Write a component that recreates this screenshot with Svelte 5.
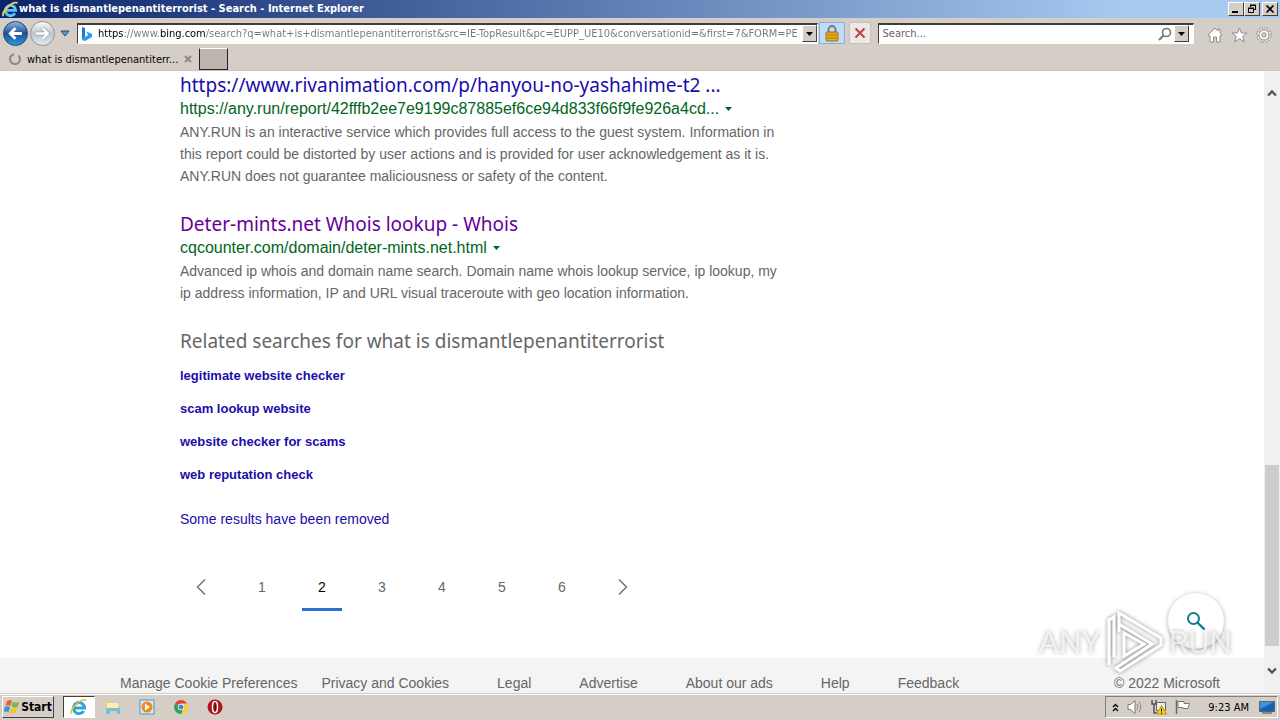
<script>
  let address =
    'https://www.bing.com/search?q=what+is+dismantlepenantiterrorist&src=IE-TopResult&pc=EUPP_UE10&conversationid=&first=7&FORM=PERE';
  let query = '';

  const results = [
    {
      title: 'https://www.rivanimation.com/p/hanyou-no-yashahime-t2 ...',
      url: 'https://any.run/report/42fffb2ee7e9199c87885ef6ce94d833f66f9fe926a4cd...',
      text: 'ANY.RUN is an interactive service which provides full access to the guest system. Information in this report could be distorted by user actions and is provided for user acknowledgement as it is. ANY.RUN does not guarantee maliciousness or safety of the content.',
      visited: false
    },
    {
      title: 'Deter-mints.net Whois lookup - Whois',
      url: 'cqcounter.com/domain/deter-mints.net.html',
      text: 'Advanced ip whois and domain name search. Domain name whois lookup service, ip lookup, my ip address information, IP and URL visual traceroute with geo location information.',
      visited: true
    }
  ];

  const related = [
    'legitimate website checker',
    'scam lookup website',
    'website checker for scams',
    'web reputation check'
  ];

  const pages = [1, 2, 3, 4, 5, 6];
  const footerLinks = ['Legal', 'Advertise', 'About our ads', 'Help', 'Feedback'];
</script>

<div class="screen">
  <header class="titlebar">
    <svg class="titlebar__icon" viewBox="0 0 18 18" aria-hidden="true">
      <path d="M4 10h10.500a5.500 5.500 0 1 0-.8 3" fill="none" stroke="#5cc3f3" stroke-width="3" />
      <path d="M1.500 16C-1 12 10 0 16.500 2" fill="none" stroke="#f2d24b" stroke-width="2" />
    </svg>
    <h1>what is dismantlepenantiterrorist - Search - Internet Explorer</h1>
    <div class="titlebar__buttons">
      <button class="win" aria-label="Minimize">
        <svg viewBox="0 0 12 10"><path d="M2 8h6" stroke="#000" stroke-width="2" /></svg>
      </button>
      <button class="win" aria-label="Restore">
        <svg viewBox="0 0 12 10"><path d="M4.500 3V1.500h5v4H8M4 1h6M2.500 4.500h5v4h-5zM2 4h6" fill="none" stroke="#000" /></svg>
      </button>
      <button class="win win--close" aria-label="Close">
        <svg viewBox="0 0 12 10"><path d="M2.500 1.500l7 7m0-7l-7 7" stroke="#000" stroke-width="1.700" /></svg>
      </button>
    </div>
  </header>

  <nav class="toolbar">
    <div class="history">
      <button class="round round--back" aria-label="Back">
        <svg viewBox="0 0 16 16"><path d="M14 8H3m5-5L3 8l5 5" fill="none" stroke="#fff" stroke-width="2.600" /></svg>
      </button>
      <button class="round" aria-label="Forward">
        <svg viewBox="0 0 16 16"><path d="M2 8h11M8 3l5 5-5 5" fill="none" stroke="#9ba3ad" stroke-width="3.600" /><path d="M2 8h11M8 3l5 5-5 5" fill="none" stroke="#fff" stroke-width="2.200" /></svg>
      </button>
      <button class="plain" aria-label="Recent pages">
        <svg width="10" height="7" viewBox="0 0 10 7"><path d="M1 1h8L5 6z" fill="#37aee0" stroke="#27476b" /></svg>
      </button>
    </div>

    <div class="field field--address">
      <svg width="12" height="16" viewBox="0 0 12 16" aria-hidden="true">
        <path d="M1 1l3 1v9l-3 3z" fill="#1879df" />
        <path d="M1 14l3-3 3-2-1.500-3.500L11 8v3l-7 4z" fill="#2d9bf0" />
      </svg>
      <input class="address" aria-label="Address" bind:value={address} />
      <button class="drop" aria-label="Show address list">
        <svg width="7" height="4" viewBox="0 0 7 4"><path d="M0 0h7L3.500 4z" /></svg>
      </button>
    </div>
    <button class="tool tool--lock" aria-label="Security report">
      <svg width="14" height="17" viewBox="0 0 14 17">
        <path d="M3.500 8V4.500a3.500 3.500 0 0 1 7 0V8" fill="none" stroke="#777" stroke-width="1.800" />
        <rect x="1" y="7" width="12" height="9" rx="1" fill="#e5ac1d" stroke="#99711b" />
        <path d="M2 10h10M2 13h10" stroke="#b47d0d" />
      </svg>
    </button>
    <button class="tool" aria-label="Stop">
      <svg width="12" height="12" viewBox="0 0 12 12"><path d="M1.500 1.500l9 9m0-9l-9 9" stroke="#bd4145" stroke-width="2" /></svg>
    </button>

    <div class="field field--search">
      <input aria-label="Search" placeholder="Search..." bind:value={query} />
      <button class="plain" aria-label="Go">
        <svg width="14" height="14" viewBox="0 0 14 14"><circle cx="8.500" cy="5.500" r="4" fill="none" stroke="#777" stroke-width="1.600" /><path d="M5.500 8.500L1 13" stroke="#777" stroke-width="2" /></svg>
      </button>
      <button class="drop" aria-label="Search providers">
        <svg width="7" height="4" viewBox="0 0 7 4"><path d="M0 0h7L3.500 4z" /></svg>
      </button>
    </div>

    <div class="commands">
      <button class="plain" aria-label="Home">
        <svg width="16" height="16" viewBox="0 0 16 16"><path d="M8 1L.8 8.200l1.400 1L3 8.500V15h3.500v-5h3v5H13V8.500l.8.700 1.400-1L13 6V2h-2v2z" fill="#fff" stroke="#8d8d8d" /></svg>
      </button>
      <button class="plain" aria-label="Favorites">
        <svg width="17" height="16" viewBox="0 0 17 16"><path d="M8.500 1l2 5h5.500l-4.300 3.500L13.300 15 8.500 11.700 3.700 15l1.600-5.500L1 6h5.500z" fill="#fff" stroke="#8d8d8d" /></svg>
      </button>
      <button class="plain" aria-label="Tools">
        <svg width="16" height="16" viewBox="0 0 16 16">
          <circle cx="8" cy="8" r="6" fill="none" stroke="#8d8d8d" stroke-width="3.500" stroke-dasharray="2.700 2.012" />
          <circle cx="8" cy="8" r="6" fill="none" stroke="#fff" stroke-width="2" stroke-dasharray="1.700 3.012" stroke-dashoffset="-.5" />
          <circle cx="8" cy="8" r="5" fill="#fff" stroke="#999" />
          <circle cx="8" cy="8" r="2.200" fill="#d5d0c8" stroke="#8d8d8d" />
        </svg>
      </button>
    </div>
  </nav>

  <div class="tabs">
    <div class="tab">
      <svg width="12" height="12" viewBox="0 0 12 12" aria-hidden="true"><path d="M5 1.200A5 5 0 1 0 9.500 2.500" fill="none" stroke="#888" stroke-width="2" /></svg>
      <span>what is dismantlepenantiterr...</span>
      <button class="plain" aria-label="Close tab">
        <svg width="8" height="8" viewBox="0 0 8 8"><path d="M1 1l6 6m0-6L1 7" stroke="#888" stroke-width="2" /></svg>
      </button>
    </div>
    <button class="newtab" aria-label="New tab"></button>
  </div>

  <div class="viewport">
    <div class="page">
      <main>
        {#each results as result}
          <article class="result">
            <h2><a href="#result" class:visited={result.visited}>{result.title}</a></h2>
            <div class="result__url">
              <cite>{result.url}</cite>
              <button class="plain" aria-label="Result actions">
                <svg width="7" height="4" viewBox="0 0 7 4"><path d="M0 0h7L3.500 4z" fill="#006621" /></svg>
              </button>
            </div>
            <p>{result.text}</p>
          </article>
        {/each}

        <section class="related">
          <h2>Related searches for what is dismantlepenantiterrorist</h2>
          <ul>
            {#each related as item}
              <li><a href="#related">{item}</a></li>
            {/each}
          </ul>
        </section>

        <a class="removed" href="#removed">Some results have been removed</a>

        <nav class="pager" aria-label="Pages">
          <a class="arrow" href="#prev" aria-label="Previous page">
            <svg width="10" height="16" viewBox="0 0 10 16"><path d="M9 .5L1.500 8 9 15.500" fill="none" stroke="#767676" stroke-width="1.500" /></svg>
          </a>
          {#each pages as page}
            <a href="#page" class:current={page === 2}>{page}</a>
          {/each}
          <a class="arrow" href="#next" aria-label="Next page">
            <svg width="10" height="16" viewBox="0 0 10 16"><path d="M1 .5L8.500 8 1 15.500" fill="none" stroke="#767676" stroke-width="1.500" /></svg>
          </a>
        </nav>
      </main>

      <footer class="footer">
        <div class="footer__privacy">
          <a href="#cookies">Manage Cookie Preferences</a>
          <a href="#privacy">Privacy and Cookies</a>
        </div>
        {#each footerLinks as link}
          <a href="#footer">{link}</a>
        {/each}
        <span class="footer__copy">© 2022 Microsoft</span>
      </footer>

      <button class="fab" aria-label="Search again">
        <svg width="20" height="20" viewBox="0 0 20 20"><circle cx="7.500" cy="7.500" r="5.500" fill="none" stroke="#0e7c92" stroke-width="2" /><path d="M11.500 11.500L18.500 18.500" stroke="#0e7c92" stroke-width="2.400" /></svg>
      </button>
      <div class="watermark">
        <span>ANY</span>
        <svg width="62" height="66" viewBox="0 0 62 66" aria-hidden="true">
          <path d="M5 56V11l5-3v40M15 23V4l42 25v7L16 62l-4-3 36-24-33-20M20 24l20 11-20 12z" fill="none" stroke="#fff" stroke-width="3" />
        </svg>
        <span>RUN</span>
      </div>
    </div>

    <div class="scrollbar">
      <button class="plain" aria-label="Scroll up">
        <svg width="10" height="8" viewBox="0 0 10 8"><path d="M1 6.500l4-4 4 4" fill="none" stroke="#555" stroke-width="2.400" /></svg>
      </button>
      <div class="scrollbar__track"><div class="scrollbar__thumb"></div></div>
      <button class="plain" aria-label="Scroll down">
        <svg width="10" height="8" viewBox="0 0 10 8"><path d="M1 1.500l4 4 4-4" fill="none" stroke="#555" stroke-width="2.400" /></svg>
      </button>
    </div>
  </div>

  <div class="taskbar">
    <button class="start">
      <svg width="16" height="16" viewBox="0 0 16 16" aria-hidden="true">
        <path d="M3 2q3-2 5 0L6.500 7Q4 5.500 1.500 7z" fill="#e9652b" />
        <path d="M9 2.500q3 2 6 0L13.500 8q-3 1.500-6-.5z" fill="#79b943" />
        <path d="M1 8q3-1.500 5 0L4.500 13Q2.500 12-.5 13z" fill="#3f8fd6" />
        <path d="M7 8.500q3 2 6 .5l-1.500 5q-3 1.500-6-.5z" fill="#f6c430" />
      </svg>
      Start
    </button>
    <div class="apps">
      <button class="app app--active" aria-label="Internet Explorer">
        <svg width="18" height="18" viewBox="0 0 18 18">
          <path d="M4 10h10.500a5.500 5.500 0 1 0-.8 3" fill="none" stroke="#2ba4e0" stroke-width="3" />
          <path d="M1.500 16C-1 12 10 0 16.500 2" fill="none" stroke="#eebd30" stroke-width="1.600" />
        </svg>
      </button>
      <button class="app" aria-label="Explorer">
        <svg width="16" height="16" viewBox="0 0 16 16">
          <path d="M1 2h6l1 2h6v9H1z" fill="#e8cf72" />
          <path d="M2 4h11v5H2z" fill="#f9efb8" />
          <path d="M1 9h14v6h-3v-3H5v3H1z" fill="#73bfdc" />
        </svg>
      </button>
      <button class="app" aria-label="Media Player">
        <svg width="16" height="16" viewBox="0 0 16 16">
          <path d="M1 1h14v14H1z" fill="#d7e9f5" stroke="#4d94cc" />
          <circle cx="8" cy="8" r="5.500" fill="#f28a18" />
          <path d="M6 4.500v7L11 8z" fill="#fff" />
        </svg>
      </button>
      <button class="app" aria-label="Chrome">
        <svg width="14" height="14" viewBox="0 0 14 14">
          <path d="M7 7L1 3.500A7 7 0 0 1 13 3.500z" fill="#de4537" />
          <path d="M7 7V3.500h6A7 7 0 0 1 7 14z" fill="#f9cf35" />
          <path d="M7 7l2 2-2 5A7 7 0 0 1 1 3.500z" fill="#2ea04f" />
          <circle cx="7" cy="7" r="3.200" fill="#fff" /><circle cx="7" cy="7" r="2.500" fill="#4285d8" />
        </svg>
      </button>
      <button class="app" aria-label="Opera">
        <svg width="16" height="16" viewBox="0 0 16 16">
          <circle cx="8" cy="8" r="7.500" fill="#b5121b" />
          <ellipse cx="8" cy="8" rx="2.500" ry="5.500" fill="#711" stroke="#fff" stroke-width="1.500" />
        </svg>
      </button>
    </div>
    <div class="tray">
      <button class="plain" aria-label="Show hidden icons">
        <svg width="7" height="9" viewBox="0 0 7 9"><path d="M1 4l2.500-2.500L6 4M1 8l2.500-2.500L6 8" fill="none" stroke="#000" stroke-width="1.400" /></svg>
      </button>
      <svg width="16" height="16" viewBox="0 0 16 16" aria-hidden="true">
        <path d="M1 5.500h2.500L8 1.500v13l-4.500-4H1z" fill="#fff" stroke="#777" />
        <path d="M10 5q2 3 0 6M12 3q3.500 5 0 10" fill="none" stroke="#888" />
      </svg>
      <svg width="16" height="16" viewBox="0 0 16 16" aria-hidden="true">
        <path d="M5.500 3.500h9v8h-9z" fill="#eee" stroke="#666" />
        <path d="M1 1v4h4V1M3 5v9h4" fill="none" stroke="#555" stroke-width="1.500" />
        <path d="M10.500 6.500l5 8.500h-10z" fill="#f7d116" stroke="#b9930e" /><path d="M10.500 9.500v3m0 1v1" stroke="#000" />
      </svg>
      <svg width="16" height="16" viewBox="0 0 16 16" aria-hidden="true">
        <path d="M1.500 1v14" stroke="#666" stroke-width="1.500" />
        <path d="M3 2.500h6v2h5.500L13 9.500H8v-1H3z" fill="#fff" stroke="#777" />
      </svg>
      <time>9:23 AM</time>
      <svg width="16" height="14" viewBox="0 0 16 14" aria-hidden="true">
        <path d="M.5 1.500h15v10H.5z" fill="#1761b5" stroke="#57636f" />
        <path d="M1 2h14L1 9z" fill="#4192df" /><path d="M3 13h10" stroke="#444" />
      </svg>
    </div>
  </div>
</div>

<style>
  :global(body) {
    overflow: hidden;
  }

  .screen {
    display: flex;
    flex-direction: column;
    height: 100vh;
    background-color: #d5cec6;
    color: #000;
    font-family: Tahoma, 'DejaVu Sans Condensed', sans-serif;
    font-size: 11px;
  }

  button,
  input {
    box-sizing: border-box;
    margin: 0;
    padding: 0;
    font: inherit;
  }
  button {
    display: flex;
    align-items: center;
    justify-content: center;
  }
  svg {
    display: block;
    flex: none;
  }
  a {
    text-decoration: none;
  }
  .plain {
    border: 0;
    background: none;
  }

  .titlebar {
    display: flex;
    align-items: center;
    height: 18px;
    padding: 0 2px;
    background: linear-gradient(to right, #0a246a, #a6caf0 88%);
  }
  .titlebar__icon {
    width: 17px;
    height: 17px;
  }
  .titlebar h1 {
    flex: 1;
    margin: 0;
    color: #fff;
    font-size: 11px;
    line-height: 18px;
  }
  .titlebar__buttons {
    display: flex;
  }
  .win {
    width: 16px;
    height: 14px;
    border: 1px solid;
    border-color: #fff #404040 #404040 #fff;
    background-color: #d5cec6;
  }
  .win svg {
    width: 12px;
    height: 10px;
  }
  .win--close {
    margin-left: 2px;
  }

  .toolbar {
    display: flex;
    align-items: center;
    height: 30px;
    padding: 0 8px 0 3px;
  }
  .history {
    display: flex;
    align-items: center;
    gap: 2px;
    width: 74px;
  }
  .round {
    width: 25px;
    height: 25px;
    border: 1px solid #8d949d;
    border-radius: 50%;
    background: linear-gradient(#f8f9fa, #bcc5cf 50%, #e5e9ed);
  }
  .round svg {
    width: 17px;
    height: 17px;
  }
  .round--back {
    border-color: #204477;
    background: linear-gradient(#8db5df, #1e4e97 50%, #3298da);
  }
  .history .plain {
    margin-left: 3px;
  }
  .field {
    display: flex;
    align-items: center;
    box-sizing: border-box;
    height: 21px;
    border: 1px solid;
    border-color: #403c3c #fff #fff #403c3c;
    border-top-width: 2px;
    background-color: #fff;
  }
  .field input {
    flex: 1;
    min-width: 0;
    height: 18px;
    border: 0;
    outline: 0;
    background-color: transparent;
  }
  .field--address {
    flex: 7;
    padding-left: 3px;
  }
  .field .address {
    margin: 0 4px 0 5px;
    background: linear-gradient(to right, #000 26px, #777 26px 62px, #000 62px 108px, #777 108px);
    background-clip: text;
    color: transparent;
  }
  .field--search {
    flex: 3;
    padding: 0 4px;
    margin-left: 7px;
  }
  .field--search input::placeholder {
    color: #666;
  }
  .field--search .drop {
    margin-left: 2px;
  }
  .drop {
    width: 15px;
    height: 17px;
    border: 1px solid;
    border-color: #fff #404040 #404040 #fff;
    background-color: #d5cec6;
  }
  .tool {
    width: 22px;
    height: 22px;
    margin-left: 4px;
    border: 1px solid #c5bfc0;
    background-color: #ece8e6;
  }
  .tool--lock {
    width: 26px;
    margin-left: 1px;
    border-color: #86aee0;
    background-color: #c2dcf8;
  }
  .field--address,
  .field--search {
    flex-shrink: 1;
  }
  .field--address {
    flex-grow: 12;
  }
  .field--search {
    flex-grow: 5;
  }
  .commands {
    display: flex;
    align-items: center;
    gap: 8px;
    margin-left: 13px;
    padding-top: 4px;
  }

  .tabs {
    display: flex;
    height: 23px;
    box-sizing: border-box;
    border-bottom: 1px solid #cbc4bd;
  }
  .tab {
    display: flex;
    align-items: center;
    width: 190px;
    padding: 0 0 0 9px;
  }
  .tab span {
    flex: 1;
    padding-left: 6px;
    white-space: nowrap;
  }
  .tab .plain {
    padding-right: 7px;
  }
  .newtab {
    width: 29px;
    height: 22px;
    border: 1px solid;
    border-color: #fff #222 #222 #222;
    background-color: #bdb6b0;
  }

  .viewport {
    position: relative;
    display: flex;
    flex: 1;
    min-height: 0;
    background-color: #fff;
    color: #666;
    font-family: 'Liberation Sans', Arial, sans-serif;
    font-size: 14px;
    line-height: 22px;
  }
  .page {
    display: flex;
    flex: 1;
    flex-direction: column;
    overflow: hidden;
  }
  main {
    max-width: 608px;
    padding: 2px 0 0 180px;
  }
  h2 {
    margin: 0;
    font: 19px/24px 'Segoe UI', 'Noto Sans', sans-serif;
    white-space: nowrap;
  }
  h2 a,
  .related a,
  .removed {
    color: #1a0dab;
  }
  h2 .visited {
    color: #609;
  }
  .result {
    margin-bottom: 25px;
  }
  .result p {
    margin: 0;
  }
  .result__url {
    display: flex;
    align-items: center;
    gap: 6px;
    color: #006621;
    font-size: 16px;
    line-height: 24px;
  }
  .result__url cite {
    font-style: normal;
  }
  .related ul {
    margin: 6px 0 17px;
    padding: 0;
    list-style-type: none;
  }
  .related li {
    font-size: 13px;
    font-weight: bold;
    line-height: 33px;
  }
  .pager {
    display: flex;
    gap: 20px;
    margin-top: 36px;
  }
  .pager a {
    display: flex;
    align-items: center;
    justify-content: center;
    width: 40px;
    height: 42px;
    border-bottom: 3px solid transparent;
    color: #666;
  }
  .pager .arrow {
    width: 42px;
  }
  .pager .current {
    border-color: #2a70cc;
    color: #000;
  }

  .footer {
    display: flex;
    gap: 48px;
    margin-top: auto;
    padding: 14px 44px 0 120px;
    height: 21px;
    background-color: #f4f4f4;
    white-space: nowrap;
  }
  .footer a {
    color: #666;
  }
  .footer__privacy {
    display: flex;
    gap: 24px;
  }
  .footer__copy {
    margin-left: auto;
  }
  .fab {
    position: absolute;
    right: 56px;
    bottom: 44px;
    width: 56px;
    height: 56px;
    border: 0;
    border-radius: 50%;
    background-color: #fff;
    box-shadow: 0 1px 5px #0005;
  }
  .watermark {
    position: absolute;
    right: 48px;
    bottom: 18px;
    display: flex;
    align-items: center;
    gap: 3px;
    color: #fffa;
    font-family: Roboto, sans-serif;
    font-size: 32px;
    filter: drop-shadow(0 0 2px #0007);
    pointer-events: none;
  }

  .scrollbar {
    display: flex;
    flex-direction: column;
    align-items: center;
    width: 16px;
    background-color: #f0f0f0;
  }
  .scrollbar .plain {
    width: 16px;
    height: 44px;
  }
  .scrollbar__track {
    display: flex;
    flex: 1;
    align-items: flex-end;
    width: 14px;
    padding-bottom: 3px;
  }
  .scrollbar__thumb {
    width: 14px;
    height: 34%;
    background-color: #cdcdcd;
  }

  .taskbar {
    display: flex;
    align-items: center;
    height: 26px;
    padding: 0 2px;
    border-top: 1px solid #d5cec6;
    box-shadow: inset 0 1px #fff;
  }
  .start {
    gap: 1px;
    width: 52px;
    height: 22px;
    border: 1px solid;
    border-color: #fff #404040 #404040 #fff;
    background-color: #d5cec6;
    font-size: 12px;
    font-weight: bold;
  }
  .apps {
    display: flex;
    gap: 2px;
    margin-left: 9px;
  }
  .app {
    width: 32px;
    height: 22px;
    border: 1px solid transparent;
    background: none;
  }
  .app--active {
    border-color: #404040 #fff #fff #404040;
    background-color: #fff;
  }
  .tray {
    display: flex;
    align-items: center;
    gap: 8px;
    height: 20px;
    margin-left: auto;
    padding: 0 2px 0 6px;
    border: 1px solid;
    border-color: #808080 #fff #fff #808080;
  }
  .tray time {
    padding: 0 2px 0 9px;
  }
</style>
